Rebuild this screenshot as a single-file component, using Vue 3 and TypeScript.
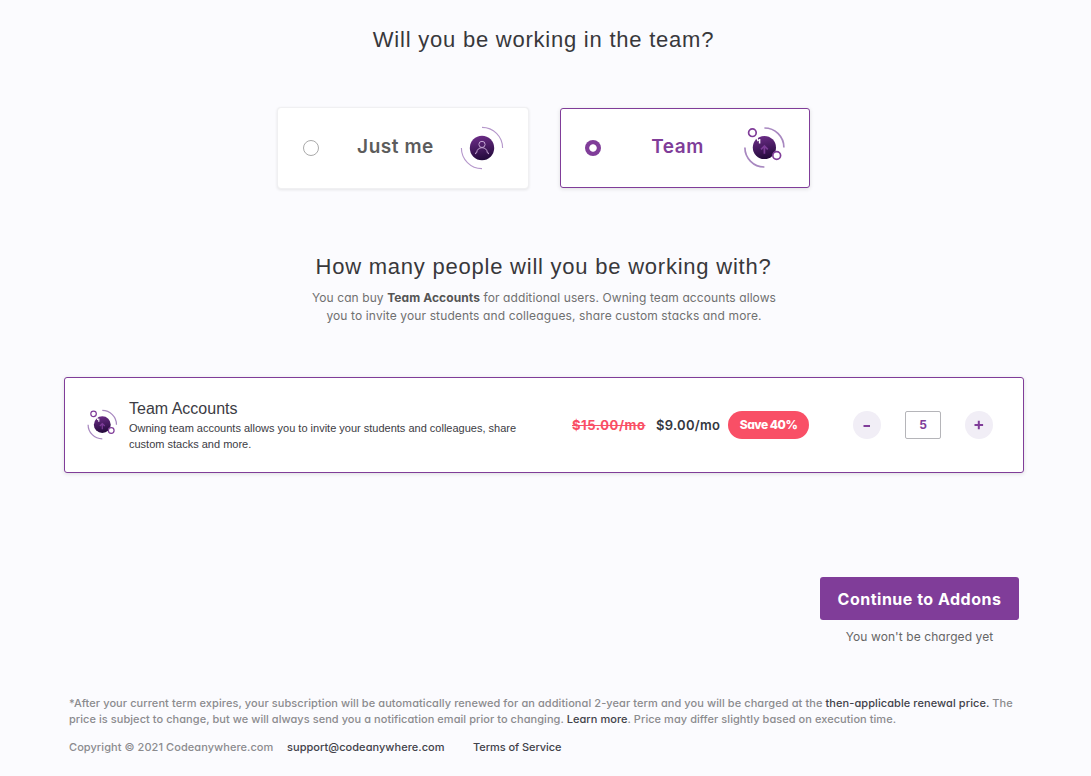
<script setup lang="ts">
import { computed, ref } from 'vue'

type Plan = 'solo' | 'team'

const plan = ref<Plan>('team')
const seats = ref(5)
const canRemove = computed(() => seats.value > 1)

function removeSeat(): void {
  if (canRemove.value) seats.value -= 1
}

function addSeat(): void {
  seats.value += 1
}
</script>

<template>
  <main class="page">
    <svg class="defs" width="0" height="0" aria-hidden="true">
      <defs>
        <linearGradient id="orb" x1="0.4" y1="0" x2="0.6" y2="1">
          <stop offset="0" stop-color="#6b2c86" />
          <stop offset="1" stop-color="#210939" />
        </linearGradient>
        <symbol id="team-icon" viewBox="0 0 44 44">
          <g transform="translate(0.4 -0.5)">
            <path d="M22 2.5A19.5 19.5 0 0 1 41.5 22M22 41.5A19.5 19.5 0 0 1 2.5 22" fill="none" stroke="#a888c0" stroke-width="1.7" />
            <circle cx="22" cy="22" r="11.6" fill="url(#orb)" />
            <path d="M14.4 12.4l1.4 3.2M17.2 13.6v4.4" stroke="#fff" stroke-width="1.5" />
            <path d="M22 28.2v-7.6M18.6 23.8l3.4-3.3 3.4 3.3" fill="none" stroke="#7d3c98" stroke-width="1.7" />
            <circle cx="10" cy="7.2" r="3.8" fill="#fff" stroke="#803d99" stroke-width="1.7" />
            <circle cx="34.3" cy="30" r="3.9" fill="#fff" stroke="#803d99" stroke-width="1.7" />
          </g>
        </symbol>
      </defs>
    </svg>

    <h1 class="title">Will you be working in the team?</h1>

    <div class="plans">
      <button class="plan" :class="{ active: plan === 'solo' }" @click="plan = 'solo'">
        <span class="radio"></span>
        <span class="plan-name">Just me</span>
        <svg class="plan-icon" viewBox="0 0 44 44">
          <path d="M22 1.4A20.6 20.6 0 0 1 42.6 22M22 42.6A20.6 20.6 0 0 1 1.4 22" fill="none" stroke="#b597cb" stroke-width="1.1" />
          <circle cx="22" cy="22" r="12.2" fill="url(#orb)" />
          <circle cx="22" cy="18.4" r="3.1" fill="none" stroke="#c5a6d3" stroke-width="1" />
          <path d="M15.6 28.1v-1.2l1.1-.2c0-3 2.3-5 5.3-5s5.3 2 5.3 5l1.1.2v1.2" fill="none" stroke="#c5a6d3" stroke-width="1" />
        </svg>
      </button>
      <button class="plan" :class="{ active: plan === 'team' }" @click="plan = 'team'">
        <span class="radio"></span>
        <span class="plan-name">Team</span>
        <svg class="plan-icon"><use href="#team-icon" /></svg>
      </button>
    </div>

    <h2 class="title second">How many people will you be working with?</h2>
    <p class="intro">
      <span class="intro-a">You can buy <b>Team Accounts</b> for additional users. Owning team accounts allows</span><br />
      <span class="intro-b">you to invite your students and colleagues, share custom stacks and more.</span>
    </p>

    <section class="account">
      <svg class="account-icon"><use href="#team-icon" /></svg>
      <div class="account-copy">
        <h3>Team Accounts</h3>
        <p>Owning team accounts allows you to invite your students and colleagues, share<br />custom stacks and more.</p>
      </div>
      <div class="pricing">
        <span class="old"><s>$15.00/mo</s></span>
        <span class="new">$9.00/mo</span>
        <span class="save">Save 40%</span>
      </div>
      <div class="stepper">
        <button class="round" :disabled="!canRemove" aria-label="Remove a seat" @click="removeSeat">
          <svg viewBox="0 0 28 28"><path d="M10.5 15h6.5" /></svg>
        </button>
        <output class="count">{{ seats }}</output>
        <button class="round" aria-label="Add a seat" @click="addSeat">
          <svg viewBox="0 0 28 28"><path d="M9.5 14h8.6M13.8 9.8v8.4" /></svg>
        </button>
      </div>
    </section>

    <div class="checkout">
      <button class="continue">Continue to Addons</button>
      <p>You won't be charged yet</p>
    </div>

    <footer class="legal">
      <p>
        <span class="legal-a">*After your current term expires, your subscription will be automatically renewed for an additional 2-year term and you will be charged at the <a>then-applicable renewal price.</a> The</span><br />
        <span class="legal-b">price is subject to change, but we will always send you a notification email prior to changing. <a>Learn more</a>. Price may differ slightly based on execution time.</span>
      </p>
      <div class="links">
        <span class="copyright">Copyright © 2021 Codeanywhere.com</span>
        <a class="mail">support@codeanywhere.com</a>
        <a class="terms">Terms of Service</a>
      </div>
    </footer>
  </main>
</template>

<style>
body {
  background: #fbfbfe;
  overflow: hidden;
}
</style>

<style scoped>
.page {
  box-sizing: border-box;
  width: 1091px;
  height: 776px;
  padding: 25px 67px 0 64px;
  display: flex;
  flex-direction: column;
  background: #fbfbfe;
  color: #666;
  font-family: Inter, "Open Sans", sans-serif;
  font-feature-settings: "cv11";
  white-space: nowrap;
}
.defs {
  position: absolute;
}
h1, h2, h3, p {
  margin: 0;
}
button {
  font: inherit;
  font-feature-settings: inherit;
  cursor: pointer;
}
.title {
  height: 30px;
  padding-right: 1px;
  line-height: 30px;
  text-align: center;
  font-family: "Liberation Sans", Arial, sans-serif;
  font-size: 22px;
  font-weight: 400;
  letter-spacing: 0.77px;
  color: #38383b;
}
.plans {
  display: flex;
  justify-content: center;
  gap: 32px;
  margin-top: 53px;
}
.plan {
  box-sizing: border-box;
  width: 250px;
  height: 80px;
  padding: 0 23px 0 24px;
  display: flex;
  align-items: center;
  border: 1px solid #fff;
  border-radius: 3px;
  background: #fff;
  color: #5c5c5c;
  box-shadow: 0 0 0 1px #f0f0f2, 0 1px 3px 1px #00000017;
}
.plan.active {
  border-color: #803d99;
  color: #803d99;
  box-shadow: 0 1px 4px #0000001f;
}
.radio {
  box-sizing: border-box;
  width: 16px;
  height: 16px;
  border: 1px solid #aaa;
  border-radius: 50%;
}
.active .radio {
  border: 0;
  background: radial-gradient(circle, #fff 3.3px, #803d99 4.1px);
}
.plan-name {
  flex: 1;
  padding: 0 0 3px 12px;
  text-align: center;
  font-size: 19px;
  font-weight: 600;
  font-feature-settings: normal;
  letter-spacing: 0.55px;
}
.plan-icon {
  flex: none;
  width: 44px;
  height: 44px;
}
.second {
  margin-top: 64px;
}
.intro {
  height: 36px;
  margin-top: 7px;
  text-align: center;
  font-size: 12px;
  line-height: 18px;
  color: #707070;
}
.intro-a {
  letter-spacing: 0.09px;
}
.intro-b {
  letter-spacing: 0.125px;
}
.intro b {
  color: #555;
}
.account {
  box-sizing: border-box;
  height: 96px;
  margin-top: 52px;
  padding-left: 21px;
  display: flex;
  align-items: center;
  border: 1px solid #803d99;
  border-radius: 3px;
  background: #fff;
  box-shadow: 0 1px 4px #0000001f;
}
.account-icon {
  width: 32px;
  height: 32px;
}
.account-copy {
  width: 443px;
  margin-left: 11px;
  padding-bottom: 1px;
  font-family: "Liberation Sans", Arial, sans-serif;
  color: #3c3c44;
}
.account-copy h3 {
  font-size: 16px;
  font-weight: 400;
  line-height: 24px;
}
.account-copy p {
  margin-top: -1px;
  font-size: 11px;
  line-height: 16px;
}
.pricing {
  width: 281px;
  display: flex;
  align-items: center;
  font-size: 13px;
  font-weight: 600;
}
.old {
  width: 84px;
  padding-bottom: 1px;
  color: #f94f66;
  font-weight: 700;
  letter-spacing: 0.55px;
}
.new {
  width: 72px;
  padding-bottom: 1px;
  color: #343740;
  letter-spacing: 0.28px;
}
.save {
  width: 81px;
  height: 28px;
  border-radius: 14px;
  background: #f94f66;
  color: #fff;
  font-size: 12px;
  font-weight: 800;
  letter-spacing: -0.5px;
  line-height: 28px;
  text-align: center;
}
.stepper {
  display: flex;
  align-items: center;
  gap: 24px;
}
.round {
  width: 28px;
  height: 28px;
  padding: 0;
  border: 0;
  border-radius: 50%;
  background: #f1eef6;
}
.round svg {
  display: block;
  fill: none;
  stroke: #803d99;
  stroke-width: 2;
}
.count {
  box-sizing: border-box;
  width: 36px;
  height: 28px;
  border: 1px solid #b5b5b9;
  border-radius: 2px;
  color: #803d99;
  font-size: 12px;
  font-weight: 700;
  line-height: 26px;
  text-align: center;
}
.checkout {
  width: 199px;
  margin: 104px 5px 0 auto;
  text-align: center;
  font-size: 12px;
  line-height: 16px;
  letter-spacing: 0.08px;
}
.continue {
  display: block;
  width: 199px;
  height: 43px;
  margin-bottom: 9px;
  padding: 0;
  border: 0;
  border-radius: 3px;
  background: #803d99;
  color: #fff;
  font-size: 16px;
  font-weight: 700;
  letter-spacing: 0.5px;
}
.legal {
  margin: 50px 0 0 5px;
  color: #8b8b8e;
  font-size: 11px;
  font-weight: 500;
  line-height: 16px;
}
.legal-a {
  letter-spacing: 0.08px;
}
.legal-b {
  letter-spacing: 0.052px;
}
.legal a {
  color: #42424a;
}
.links {
  display: flex;
  margin-top: 12px;
}
.copyright {
  width: 218px;
  letter-spacing: 0.06px;
}
.mail {
  width: 186px;
  letter-spacing: 0.05px;
}
.terms {
  letter-spacing: -0.06px;
}
</style>
